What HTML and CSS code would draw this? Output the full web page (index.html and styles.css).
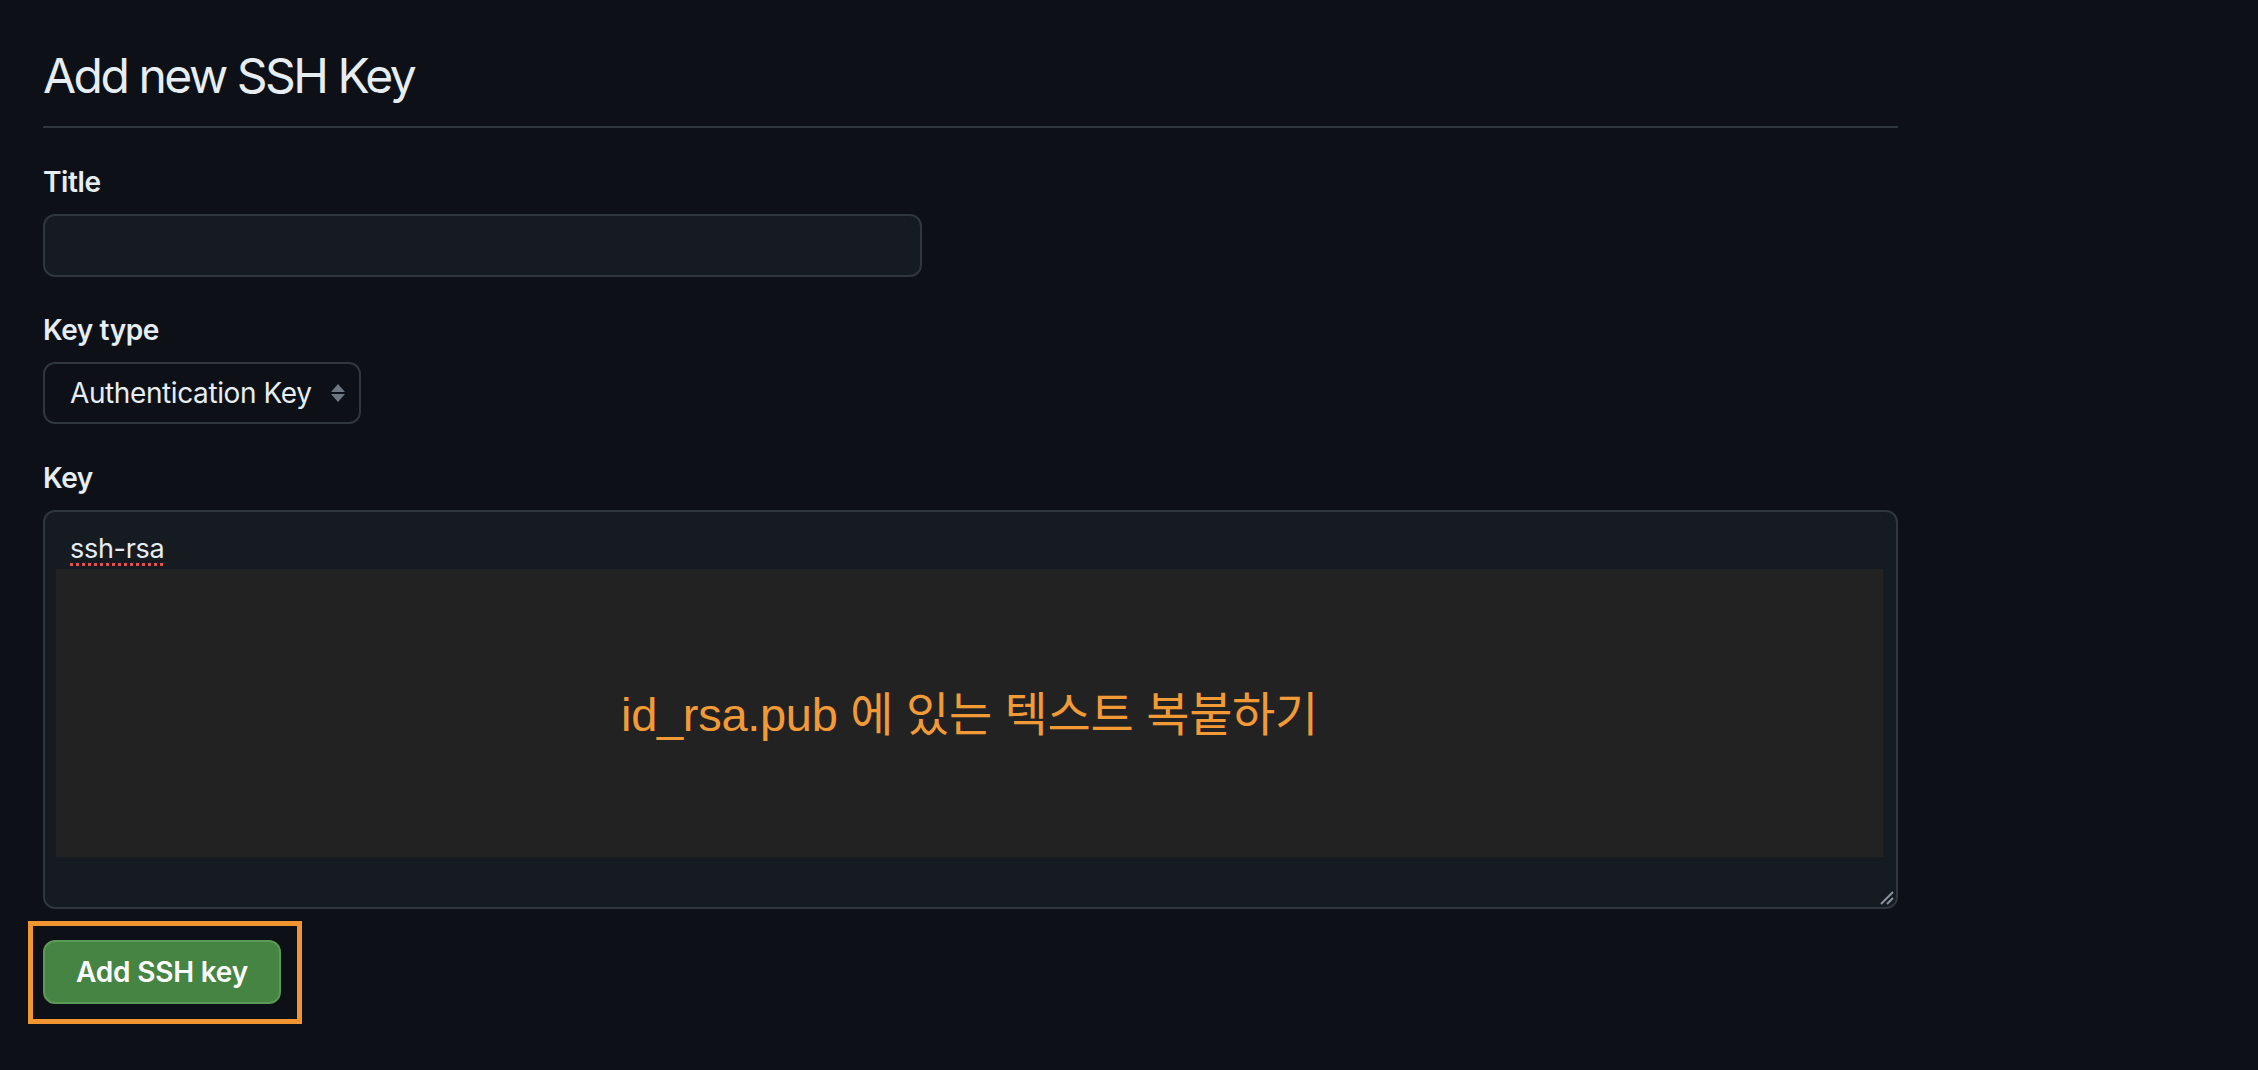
FILE: index.html
```html
<!DOCTYPE html>
<html lang="ko">
<head>
<meta charset="utf-8">
<title>Add new SSH Key</title>
<link rel="stylesheet" href="styles.css">
</head>
<body>
<div class="page">
  <div class="subhead">
    <h2 class="subhead-title">Add new SSH Key</h2>
  </div>
  <form class="form">
    <div class="group">
      <label class="label">Title</label>
      <div class="input"></div>
    </div>
    <div class="group">
      <label class="label">Key type</label>
      <div class="select">
        <span class="select-text">Authentication Key</span>
        <svg class="select-arrows" width="16" height="20" viewBox="0 0 16 20">
          <path d="M8 1 L15 9 L1 9 Z" fill="#6e7681"/>
          <path d="M8 19 L15 11 L1 11 Z" fill="#6e7681"/>
        </svg>
      </div>
    </div>
    <div class="group group-key">
      <label class="label">Key</label>
      <div class="textarea">
        <span class="spell">ssh-rsa</span>
        <div class="mask"><span class="mask-text">id_rsa.pub 에 있는 텍스트 복붙하기</span></div>
        <svg class="resize" width="14" height="14" viewBox="0 0 14 14">
          <path d="M1 13 L13 1" stroke="#8b949e" stroke-width="2"/>
          <path d="M7 13 L13 7" stroke="#8b949e" stroke-width="2"/>
        </svg>
      </div>
    </div>
    <div class="actions">
      <div class="highlight">
        <button type="button" class="btn">Add SSH key</button>
      </div>
    </div>
  </form>
</div>
</body>
</html>
```

FILE: styles.css
```css
html, body {
  margin: 0;
  padding: 0;
  background: #0d1117;
  color: #e6edf3;
  font-family: Inter, "Liberation Sans", "Noto Sans CJK KR", sans-serif;
}

body {
  min-height: 100vh;
}

.page {
  width: 1855px;
  padding: 46px 0 80px 43px;
}

.subhead {
  border-bottom: 2px solid #30363d;
  padding-bottom: 20px;
}

.subhead-title {
  margin: 0;
  font-size: 48px;
  line-height: 60px;
  font-weight: 400;
  letter-spacing: -2.5px;
}

.form {
  display: flex;
  flex-direction: column;
  gap: 32px;
  padding-top: 33px;
}

.group {
  display: flex;
  flex-direction: column;
  align-items: flex-start;
}

.group-key {
  margin-top: 1px;
  margin-bottom: -1px;
}

.label {
  font-size: 28px;
  line-height: 42px;
  font-weight: 600;
  letter-spacing: -0.4px;
  margin-bottom: 11px;
}

.input {
  box-sizing: border-box;
  width: 879px;
  height: 63px;
  background: #161b22;
  border: 2px solid #30363d;
  border-radius: 12px;
}

.select {
  box-sizing: border-box;
  height: 62px;
  width: 318px;
  display: flex;
  align-items: center;
  padding: 0 16px 0 25px;
  background: #0d1117;
  border: 2px solid #30363d;
  border-radius: 12px;
  gap: 18px;
}

.select-text {
  font-size: 28px;
  letter-spacing: -0.4px;
  white-space: nowrap;
}

.select-arrows {
  flex: none;
}

.textarea {
  position: relative;
  box-sizing: border-box;
  width: 1855px;
  height: 399px;
  background: #161b22;
  border: 2px solid #30363d;
  border-radius: 12px;
  padding: 16px 25px;
  font-size: 27px;
  line-height: 42px;
  letter-spacing: -0.3px;
}

.spell {
  text-decoration: underline dotted #e5534b;
  text-decoration-thickness: 3px;
  text-underline-offset: 5px;
}

.mask {
  position: absolute;
  left: 11px;
  top: 57px;
  width: 1827px;
  height: 288px;
  background: #222222;
  display: flex;
  align-items: center;
  justify-content: center;
}

.mask-text {
  color: #f29a36;
  font-family: "Liberation Sans", "Noto Sans CJK KR", sans-serif;
  font-size: 47px;
  padding-top: 4px;
}

.resize {
  position: absolute;
  right: 2px;
  bottom: 2px;
}

.actions {
  display: flex;
}

.highlight {
  position: relative;
}

.highlight::before {
  content: "";
  position: absolute;
  left: -15px;
  top: -19px;
  width: 274px;
  height: 103px;
  box-sizing: border-box;
  border: 5px solid #f0952f;
}

.btn {
  display: block;
  box-sizing: border-box;
  width: 238px;
  height: 64px;
  background: #468443;
  border: 2px solid #5a9a56;
  border-radius: 12px;
  color: #ffffff;
  font-family: Inter, "Liberation Sans", sans-serif;
  font-size: 28px;
  font-weight: 600;
  letter-spacing: -0.2px;
  padding: 0;
}
```
